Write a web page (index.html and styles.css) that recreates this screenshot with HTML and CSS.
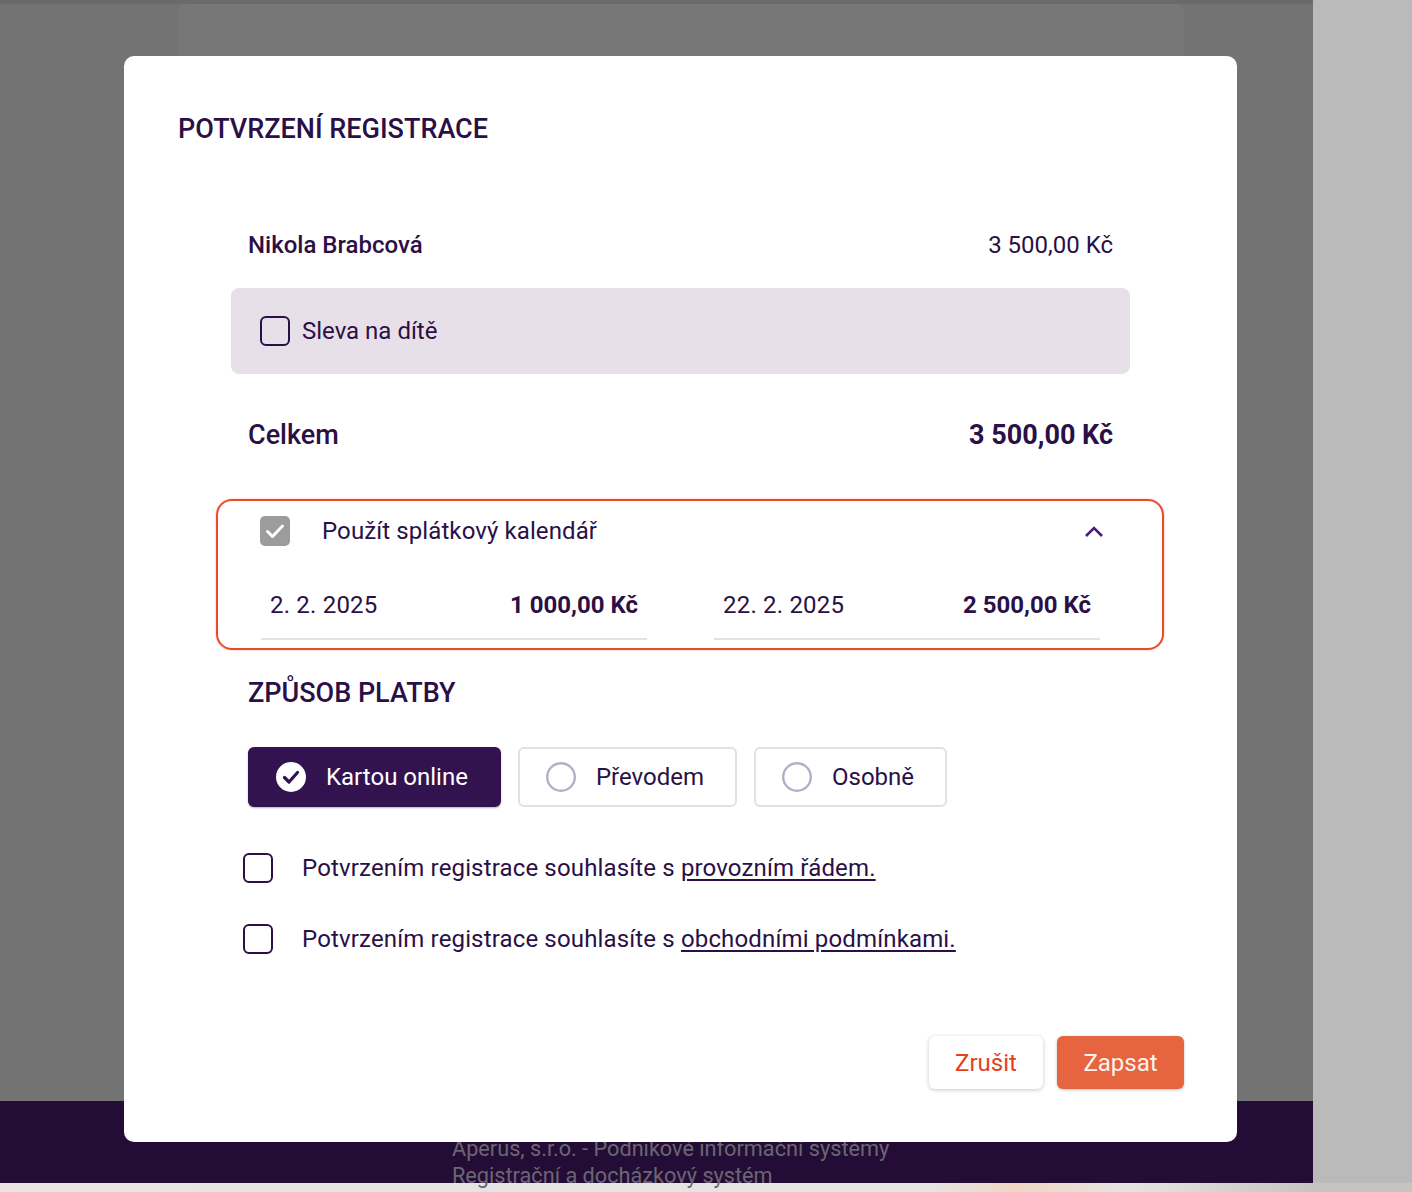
FILE: index.html
```html
<!DOCTYPE html>
<html lang="cs">
<head>
<meta charset="utf-8">
<title>Potvrzení registrace</title>
<link rel="stylesheet" href="styles.css">
</head>
<body>
<div class="screen">
  <div class="page">
    <div class="topbar"></div>
    <div class="main">
      <div class="card"></div>
    </div>
    <footer class="footer">
      <div class="footer-text">
        <div>Aperus, s.r.o. - Podnikové informační systémy</div>
        <div>Registrační a docházkový systém</div>
      </div>
    </footer>
  </div>
  <div class="side"></div>
</div>
<div class="bottom-strip"></div>

<div class="modal">
  <h1 class="modal-title">POTVRZENÍ REGISTRACE</h1>

  <div class="content">
    <div class="row name-row">
      <span class="name">Nikola Brabcová</span>
      <span class="price">3 500,00 Kč</span>
    </div>

    <div class="discount">
      <span class="checkbox"></span>
      <span class="discount-label">Sleva na dítě</span>
    </div>

    <div class="row total-row">
      <span>Celkem</span>
      <span class="total-price">3 500,00 Kč</span>
    </div>

    <div class="installments">
      <div class="annotation"></div>
      <div class="inst-head">
        <svg class="checked" width="30" height="30" viewBox="0 0 30 30"><rect x="0" y="0" width="30" height="30" rx="5" fill="#9c9c9c"/><path d="M7.5 15.5 L12.5 20.5 L22.5 10" fill="none" stroke="#fff" stroke-width="3" stroke-linecap="round" stroke-linejoin="round"/></svg>
        <span class="inst-label">Použít splátkový kalendář</span>
        <svg class="chevron" width="20" height="14" viewBox="0 0 20 14"><path d="M2 12 L10 4 L18 12" fill="none" stroke="#4b1a7e" stroke-width="2.6"/></svg>
      </div>
      <div class="inst-grid">
        <div class="inst-item"><span class="date">2. 2. 2025</span><span class="amount">1 000,00 Kč</span></div>
        <div class="inst-item"><span class="date">22. 2. 2025</span><span class="amount">2 500,00 Kč</span></div>
      </div>
    </div>

    <h2 class="section-title">ZPŮSOB PLATBY</h2>

    <div class="pay-options">
      <div class="pay-option selected">
        <svg width="30" height="30" viewBox="0 0 30 30"><circle cx="15" cy="15" r="15" fill="#fff"/><path d="M8.5 15.5 L13 20 L21.5 10.5" fill="none" stroke="#33134f" stroke-width="3.2" stroke-linecap="round" stroke-linejoin="round"/></svg>
        <span>Kartou online</span>
      </div>
      <div class="pay-option">
        <svg width="30" height="30" viewBox="0 0 30 30"><circle cx="15" cy="15" r="13.8" fill="none" stroke="#b8acc6" stroke-width="2.4"/></svg>
        <span>Převodem</span>
      </div>
      <div class="pay-option">
        <svg width="30" height="30" viewBox="0 0 30 30"><circle cx="15" cy="15" r="13.8" fill="none" stroke="#b8acc6" stroke-width="2.4"/></svg>
        <span>Osobně</span>
      </div>
    </div>

    <div class="agree first">
      <span class="checkbox"></span>
      <span>Potvrzením registrace souhlasíte s <a href="#">provozním řádem.</a></span>
    </div>
    <div class="agree second">
      <span class="checkbox"></span>
      <span>Potvrzením registrace souhlasíte s <a href="#">obchodními podmínkami.</a></span>
    </div>
  </div>

  <div class="actions">
    <button class="btn btn-cancel">Zrušit</button>
    <button class="btn btn-submit">Zapsat</button>
  </div>
</div>
</body>
</html>
```

FILE: styles.css
```css
* { box-sizing: border-box; }
html, body { margin: 0; padding: 0; }
body {
  font-family: Roboto, "Noto Sans", "Liberation Sans", sans-serif;
  background: #bababa;
  width: 1412px;
  height: 1192px;
  overflow: hidden;
  position: relative;
  color: #2a1046;
}
.screen { display: flex; height: 1183px; }
.page { width: 1313px; display: flex; flex-direction: column; background: #737373; }
.topbar { height: 4px; background: #6a6a6a; }
.main { flex: 1; padding-left: 178px; }
.card {
  width: 1006px;
  height: 100%;
  background: #777777;
  border-radius: 8px 8px 0 0;
}
.footer {
  height: 82px;
  background: #230d37;
  padding-left: 452px;
  padding-top: 34px;
  color: #6c6572;
  font-size: 21.7px;
  line-height: 27px;
}
.side { flex: 1; background: #bababa; }
.bottom-strip {
  height: 9px;
  background: linear-gradient(90deg, #ece4e4 0%, #e4e4e4 40%, #e4e4e4 66%, #f0d6c2 72%, #e4e4e4 80%, #c4c4c4 93%);
}

.modal {
  position: absolute;
  left: 124px;
  top: 56px;
  width: 1113px;
  height: 1086px;
  background: #fff;
  border-radius: 10px;
  padding: 57px 53px 53px 54px;
  display: flex;
  flex-direction: column;
}
.modal-title {
  margin: 0;
  font-size: 27px;
  line-height: 32px;
  font-weight: 500;
  color: #2a1046;
}
.content {
  margin-top: 85px;
  margin-left: 53px;
  width: 899px;
  display: flex;
  flex-direction: column;
}
.row {
  display: flex;
  justify-content: space-between;
  align-items: center;
  padding: 0 17px;
}
.name-row { height: 30px; font-size: 24px; }
.name { font-weight: 500; }
.price { font-weight: 400; }
.discount {
  margin-top: 28px;
  height: 86px;
  background: #e7e0e8;
  border-radius: 8px;
  display: flex;
  align-items: center;
  padding-left: 29px;
  gap: 12px;
  font-size: 24px;
}
.checkbox {
  width: 30px;
  height: 30px;
  border: 2.4px solid #2a1046;
  border-radius: 6px;
  flex: none;
}
.total-row {
  margin-top: 44px;
  height: 34px;
  font-size: 27px;
  font-weight: 500;
}
.total-price { font-weight: 700; font-size: 27px; }

.installments {
  position: relative;
  margin-top: 47px;
  height: 151px;
  padding-top: 17px;
}
.annotation {
  position: absolute;
  left: -15px;
  right: -34px;
  top: 0;
  bottom: 0;
  border: 2.5px solid #ec4a2d;
  border-radius: 16px;
  box-shadow: 0 0 1.5px rgba(236, 74, 45, 0.6);
  pointer-events: none;
}
.inst-head {
  display: flex;
  align-items: center;
  height: 30px;
  padding-left: 29px;
  padding-right: 26px;
  font-size: 24px;
  letter-spacing: 0.1px;
}
.checked { flex: none; }
.inst-label { margin-left: 32px; flex: 1; }
.chevron { flex: none; }
.inst-grid {
  margin-top: 29px;
  display: grid;
  grid-template-columns: 386px 386px;
  column-gap: 67px;
  padding-left: 30px;
}
.inst-item {
  display: flex;
  justify-content: space-between;
  align-items: center;
  height: 65px;
  padding: 0 9px 4px 9px;
  border-bottom: 2px solid #e2e2e2;
  font-size: 24px;
}
.date { letter-spacing: 0.2px; }
.amount { font-weight: 700; }

.section-title {
  margin: 27px 0 0 17px;
  font-size: 27px;
  line-height: 32px;
  font-weight: 500;
  color: #2a1046;
}
.pay-options {
  margin-top: 38px;
  margin-left: 17px;
  display: flex;
  gap: 17px;
}
.pay-option {
  height: 60px;
  display: flex;
  align-items: center;
  gap: 20px;
  padding: 0 31px 0 26px;
  border: 2px solid #e2e0e4;
  border-radius: 6px;
  font-size: 24px;
  color: #2a1046;
  background: #fff;
}
.pay-option.selected {
  background: #33134f;
  border-color: #33134f;
  color: #fff;
  box-shadow: 0 1px 2px rgba(0,0,0,0.3);
}
.agree {
  display: flex;
  align-items: center;
  gap: 29px;
  margin-left: 12px;
  height: 30px;
  font-size: 24px;
  letter-spacing: 0.15px;
}
.agree.first { margin-top: 46px; }
.agree.second { margin-top: 41px; }
.agree a { color: #2a1046; text-decoration: underline; text-underline-offset: 3px; }

.actions {
  margin-top: auto;
  display: flex;
  justify-content: flex-end;
  gap: 14px;
}
.btn {
  height: 53px;
  border: none;
  border-radius: 6px;
  font-family: Roboto, "Noto Sans", "Liberation Sans", sans-serif;
  font-size: 24px;
  cursor: pointer;
}
.btn-cancel {
  width: 114px;
  background: #fff;
  color: #e5401e;
  box-shadow: 0 1px 4px rgba(0,0,0,0.22);
}
.btn-submit {
  width: 127px;
  background: #e6643f;
  color: #fff3ee;
  box-shadow: 0 1px 3px rgba(0,0,0,0.25);
}
```
